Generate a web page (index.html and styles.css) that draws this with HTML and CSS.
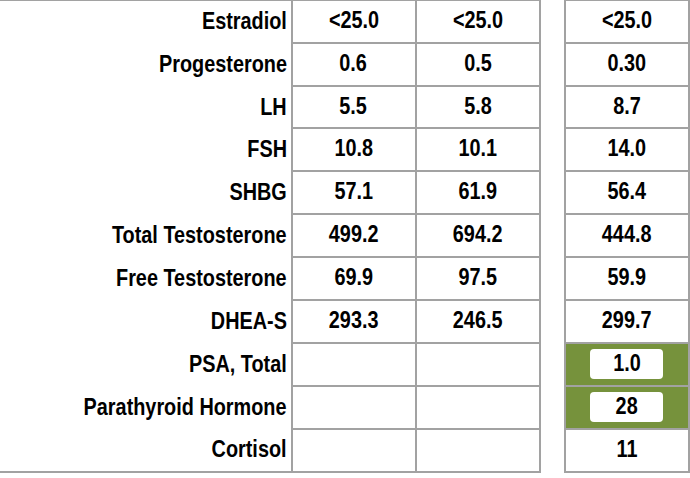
FILE: index.html
```html
<!DOCTYPE html>
<html>
<head>
<meta charset="utf-8">
<link rel="stylesheet" href="styles.css">
</head>
<body>
<div class="sheet">
  <div class="panel main">
    <div class="cell label"><span class="t">Estradiol</span></div><div class="cell val"><span class="t">&lt;25.0</span></div><div class="cell val"><span class="t">&lt;25.0</span></div>
    <div class="cell label"><span class="t">Progesterone</span></div><div class="cell val"><span class="t">0.6</span></div><div class="cell val"><span class="t">0.5</span></div>
    <div class="cell label"><span class="t">LH</span></div><div class="cell val"><span class="t">5.5</span></div><div class="cell val"><span class="t">5.8</span></div>
    <div class="cell label"><span class="t">FSH</span></div><div class="cell val"><span class="t">10.8</span></div><div class="cell val"><span class="t">10.1</span></div>
    <div class="cell label"><span class="t">SHBG</span></div><div class="cell val"><span class="t">57.1</span></div><div class="cell val"><span class="t">61.9</span></div>
    <div class="cell label"><span class="t">Total Testosterone</span></div><div class="cell val"><span class="t">499.2</span></div><div class="cell val"><span class="t">694.2</span></div>
    <div class="cell label"><span class="t">Free Testosterone</span></div><div class="cell val"><span class="t">69.9</span></div><div class="cell val"><span class="t">97.5</span></div>
    <div class="cell label"><span class="t">DHEA-S</span></div><div class="cell val"><span class="t">293.3</span></div><div class="cell val"><span class="t">246.5</span></div>
    <div class="cell label"><span class="t">PSA, Total</span></div><div class="cell val"></div><div class="cell val"></div>
    <div class="cell label"><span class="t">Parathyroid Hormone</span></div><div class="cell val"></div><div class="cell val"></div>
    <div class="cell label last"><span class="t">Cortisol</span></div><div class="cell val last"></div><div class="cell val last"></div>
  </div>
  <div class="panel side">
    <div class="cell val"><span class="t">&lt;25.0</span></div>
    <div class="cell val"><span class="t">0.30</span></div>
    <div class="cell val"><span class="t">8.7</span></div>
    <div class="cell val"><span class="t">14.0</span></div>
    <div class="cell val"><span class="t">56.4</span></div>
    <div class="cell val"><span class="t">444.8</span></div>
    <div class="cell val"><span class="t">59.9</span></div>
    <div class="cell val"><span class="t">299.7</span></div>
    <div class="cell val flag"><span class="chip"><span class="t">1.0</span></span></div>
    <div class="cell val flag"><span class="chip"><span class="t">28</span></span></div>
    <div class="cell val last"><span class="t">11</span></div>
  </div>
</div>
</body>
</html>
```
FILE: styles.css
```css
html, body {
  margin: 0;
  padding: 0;
  background: #ffffff;
}

body {
  font-family: "Liberation Sans", Arial, sans-serif;
  font-weight: bold;
  font-size: 24.5px;
  color: #000;
  overflow: hidden;
}

.sheet {
  display: flex;
  gap: 23px;
  margin-top: -1.2px;
}

.panel {
  display: grid;
  border-top: 2px solid #a2a2a2;
  border-bottom: 2px solid #a2a2a2;
  border-right: 2px solid #a2a2a2;
}

.main {
  grid-template-columns: 290.5px 124px 124.5px;
  grid-template-rows: repeat(10, 42.9px) 40.9px;
}

.side {
  grid-template-columns: 121.7px;
  grid-template-rows: repeat(10, 42.9px) 40.9px;
  border-left: 2px solid #a2a2a2;
}

.cell {
  display: flex;
  align-items: center;
  box-sizing: border-box;
  padding-bottom: 3px;
  white-space: nowrap;
}

.t {
  display: inline-block;
  transform: scaleX(0.81);
  transform-origin: center center;
}

.label {
  justify-content: flex-end;
  padding-right: 4px;
}

.label .t {
  transform-origin: right center;
}

.val {
  justify-content: center;
  border-bottom: 2px solid #a2a2a2;
}

.main .val {
  border-left: 2px solid #a2a2a2;
}

.val.last {
  border-bottom: none;
}

.flag {
  background: #76923c;
  padding-bottom: 0;
}

.chip {
  display: flex;
  align-items: center;
  justify-content: center;
  width: 73px;
  height: 30px;
  padding-bottom: 2px;
  box-sizing: border-box;
  background: #ffffff;
  border-radius: 4px;
}
```
